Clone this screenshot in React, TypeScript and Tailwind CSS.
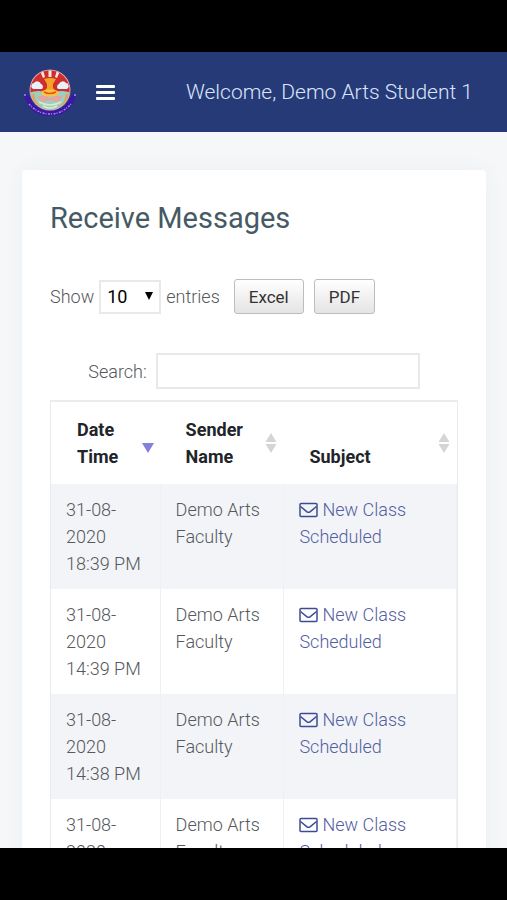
const messages = [
  { day: '31-08-2020', time: '18:39 PM' },
  { day: '31-08-2020', time: '14:39 PM' },
  { day: '31-08-2020', time: '14:38 PM' },
  { day: '31-08-2020', time: '14:37 PM' },
];

function Crest() {
  return (
    <svg viewBox="0 -3 54 48" className="h-12 w-[54px]" role="img" aria-label="College crest">
      <defs>
        <clipPath id="disc">
          <circle cx="27" cy="19" r="19.500" />
        </clipPath>
      </defs>
      <path d="M1 24 L3 22 L7 27 Q12 39 27 40 Q42 39 47 27 L51 22 L53 24 Q48 45 27 45 Q6 45 1 24Z" fill="#3c17a6" />
      <path d="M6 33 Q15 43 27 43 Q39 43 48 33" fill="none" stroke="#a58ddd" strokeWidth="1.500" strokeDasharray="2 1 1 1.500" />
      <circle cx="2" cy="24" r="1" fill="#a98bea" />
      <circle cx="52" cy="24" r="1" fill="#a98bea" />
      <circle cx="27" cy="19" r="20.500" fill="#dfa9b4" />
      <g clipPath="url(#disc)">
        <rect x="6" y="-1" width="42" height="24" fill="#cf2f2c" />
        <path d="M25.500 -1 h3 v7 h-3Z M17 0 l3 -1 l2 7 l-2 1Z M34 -1 l3 1 l-3 7 l-2 -1Z" fill="#ffe6dc" />
        <path d="M6 22 Q14 18 27 22 Q40 18 48 22 V41 H6Z" fill="#9bcfc3" />
        <path d="M9 17 a3 3 0 0 1 2-5 a4 4 0 0 1 7 1 a3 3 0 0 1 1 5 H10Z M45 17 a3 3 0 0 0 -2-5 a4 4 0 0 0 -7 1 a3 3 0 0 0 -1 5 H44Z" fill="#e8f1fa" />
        <path d="M21 8 Q27 6 33 8 L30 13 V17 L34 21 H20 L24 17 V13Z" fill="#f5a027" />
        <ellipse cx="27" cy="22" rx="9" ry="3.500" fill="#ffc23a" />
        <path d="M21 21 Q27 24 33 21" fill="none" stroke="#d95426" strokeWidth="1.500" />
        <path d="M14 26 Q20 23 27 27 Q34 23 40 26 L35 31 Q27 28 19 31Z" fill="#e5a59c" />
        <path d="M10 23 Q10 33 18 37" fill="none" stroke="#e0a556" strokeWidth="3" />
        <path d="M44 23 Q44 33 36 37" fill="none" stroke="#e0a556" strokeWidth="3" />
        <path d="M16 31 Q27 37 38 31 M20 35 Q27 39 34 35" fill="none" stroke="#dcecc9" strokeWidth="1.500" />
      </g>
    </svg>
  );
}

function Envelope() {
  return (
    <svg viewBox="0 0 19 16" className="mr-1 inline-block h-4 w-[19px] align-[-2px]" fill="none" stroke="#3c4c94" strokeWidth="1.500" strokeLinejoin="round" aria-hidden="true">
      <rect x="1" y="1.500" width="17" height="13" rx="1" />
      <path d="M1.500 4.500 L8 9.800 Q9.500 10.800 11 9.800 L17.500 4.500" />
    </svg>
  );
}

function SortBoth() {
  return (
    <svg viewBox="0 0 12 20" className="h-5 w-3 shrink-0" fill="#d5d5d5" aria-hidden="true">
      <path d="M6 0 L11.500 9 H0.500Z M0.500 11 H11.500 L6 20Z" />
    </svg>
  );
}

function SortDown() {
  return (
    <svg viewBox="0 0 12 20" className="h-5 w-3 shrink-0" fill="#8381dc" aria-hidden="true">
      <path d="M0 10 H12 L6 20Z" />
    </svg>
  );
}

const exportButton =
  'h-[35px] rounded-[3px] border border-[#bdbdbd] bg-linear-to-b from-white to-[#e4e4e4] px-[14px] text-[17px] leading-6 font-normal text-[#333]';

const headButton = 'flex h-[54px] w-full items-center justify-between text-left font-bold';

export default function App() {
  return (
    <div className="flex h-screen flex-col bg-black font-[Roboto,sans-serif] text-lg leading-[27px] font-light text-[#55585c]">
      <div className="h-[52px] shrink-0" />
      <div className="min-h-0 flex-1 overflow-hidden bg-[#f5f7f9]">
        <header className="flex h-20 items-center bg-[#263a78] pr-[34px] pl-[23px]">
          <Crest />
          <button type="button" aria-label="Toggle menu" className="ml-[19px] flex w-[19px] flex-col gap-[3px]">
            <span className="h-[3px] w-full rounded-[1px] bg-white" />
            <span className="h-[3px] w-full rounded-[1px] bg-white" />
            <span className="h-[3px] w-full rounded-[1px] bg-white" />
          </button>
          <p className="ml-auto text-[21px] whitespace-nowrap text-[#dce5f8]">Welcome, Demo Arts Student 1</p>
        </header>

        <main className="mt-[38px] mr-[21px] ml-[22px] rounded-[4px] bg-white px-7 pt-8 pb-8 shadow-[0_0_20px_rgba(69,90,100,0.05)]">
          <h1 className="text-[29px] leading-8 font-normal text-[#455a64]">Receive Messages</h1>

          <div className="mt-[45px] flex items-center">
            <label className="flex items-center gap-[5px]">
              Show
              <span className="relative">
                <select defaultValue="10" className="block h-[34px] w-[62px] appearance-none border-2 border-[#e9e9e9] bg-white pl-[6px] font-normal text-black">
                  <option>10</option>
                  <option>25</option>
                  <option>50</option>
                  <option>100</option>
                </select>
                <svg viewBox="0 0 8 8" className="pointer-events-none absolute top-[12px] right-[8px] size-2" aria-hidden="true">
                  <path d="M0 0 H8 L4 8Z" />
                </svg>
              </span>
              entries
            </label>
            <div className="ml-[14px] flex gap-[10px]">
              <button type="button" className={exportButton}>Excel</button>
              <button type="button" className={exportButton}>PDF</button>
            </div>
          </div>

          <div className="mt-[39px] flex justify-center">
            <label className="flex items-center gap-[9px]">
              Search:
              <input type="search" className="h-9 w-[264px] border-2 border-[#e9e9e9] bg-white px-2" />
            </label>
          </div>

          <table className="mt-[11px] w-full table-fixed border-separate border-spacing-0 border border-[#ebebed]">
            <colgroup>
              <col className="w-[27%]" />
              <col className="w-[30.5%]" />
              <col />
            </colgroup>
            <thead className="text-[#212529]">
              <tr>
                <th className="border-t border-[#ebebed] py-[14px] pr-[7px] pl-[26px]">
                  <button type="button" className={headButton}>
                    <span>Date<br />Time</span>
                    <SortDown />
                  </button>
                </th>
                <th className="border-t border-[#ebebed] py-[14px] pr-[7px] pl-[25px]">
                  <button type="button" className={headButton}>
                    <span>Sender<br />Name</span>
                    <SortBoth />
                  </button>
                </th>
                <th className="border-t border-[#ebebed] py-[14px] pr-[7px] pl-[25px]">
                  <button type="button" className={headButton}>
                    <span className="self-end">Subject</span>
                    <SortBoth />
                  </button>
                </th>
              </tr>
            </thead>
            <tbody className="[&_td]:border-r [&_td]:border-[#eef0f2] [&_td]:px-[15px] [&_td]:py-3 [&_td]:align-top [&_tr:nth-child(odd)]:bg-[#f2f4f8]">
              {messages.map((message) => (
                <tr key={message.time}>
                  <td>{message.day} {message.time}</td>
                  <td>Demo Arts Faculty</td>
                  <td>
                    <a href="#message" className="text-[#5260a0]">
                      <Envelope />
                      New Class Scheduled
                    </a>
                  </td>
                </tr>
              ))}
            </tbody>
          </table>
        </main>
      </div>
      <div className="h-[52px] shrink-0" />
    </div>
  );
}
